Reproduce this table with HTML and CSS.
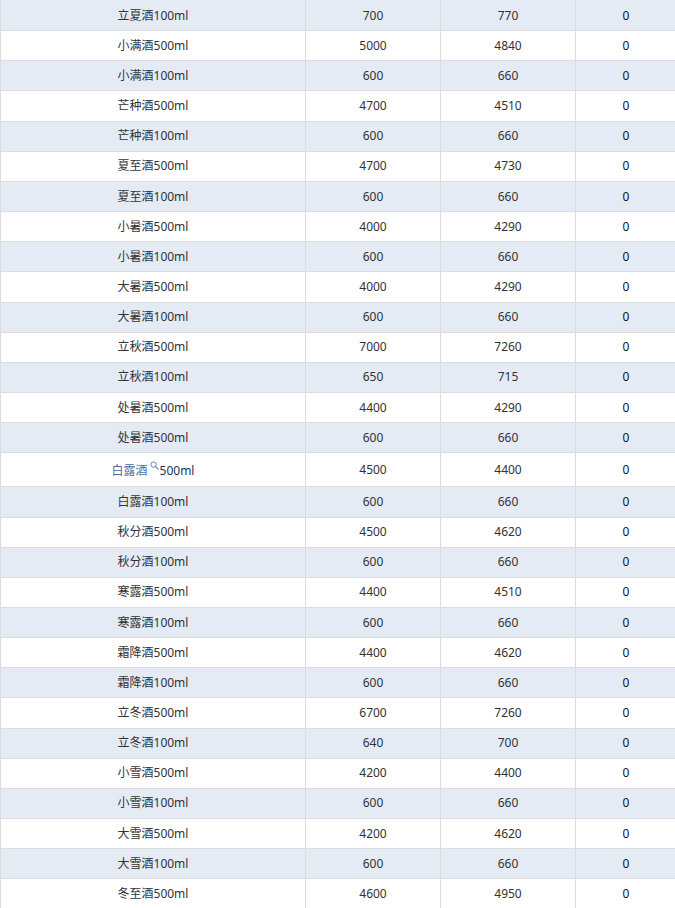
FILE: index.html
```html
<!DOCTYPE html>
<html lang="zh-CN">
<head>
<meta charset="utf-8">
<title>酒价表</title>
<link rel="stylesheet" href="styles.css">
</head>
<body>
<table class="price-table">
  <colgroup>
    <col class="c-name"><col class="c-num"><col class="c-num"><col class="c-last">
  </colgroup>
  <tbody>
    <tr class="alt first"><td>立夏酒100ml</td><td>700</td><td>770</td><td class="zero">0</td></tr>
    <tr><td>小满酒500ml</td><td>5000</td><td>4840</td><td class="zero">0</td></tr>
    <tr class="alt"><td>小满酒100ml</td><td>600</td><td>660</td><td class="zero">0</td></tr>
    <tr><td>芒种酒500ml</td><td>4700</td><td>4510</td><td class="zero">0</td></tr>
    <tr class="alt"><td>芒种酒100ml</td><td>600</td><td>660</td><td class="zero">0</td></tr>
    <tr><td>夏至酒500ml</td><td>4700</td><td>4730</td><td class="zero">0</td></tr>
    <tr class="alt"><td>夏至酒100ml</td><td>600</td><td>660</td><td class="zero">0</td></tr>
    <tr><td>小暑酒500ml</td><td>4000</td><td>4290</td><td class="zero">0</td></tr>
    <tr class="alt"><td>小暑酒100ml</td><td>600</td><td>660</td><td class="zero">0</td></tr>
    <tr><td>大暑酒500ml</td><td>4000</td><td>4290</td><td class="zero">0</td></tr>
    <tr class="alt"><td>大暑酒100ml</td><td>600</td><td>660</td><td class="zero">0</td></tr>
    <tr><td>立秋酒500ml</td><td>7000</td><td>7260</td><td class="zero">0</td></tr>
    <tr class="alt"><td>立秋酒100ml</td><td>650</td><td>715</td><td class="zero">0</td></tr>
    <tr><td>处暑酒500ml</td><td>4400</td><td>4290</td><td class="zero">0</td></tr>
    <tr class="alt"><td>处暑酒500ml</td><td>600</td><td>660</td><td class="zero">0</td></tr>
    <tr class="tall"><td><span class="link">白露酒</span><svg class="search" width="9" height="9" viewBox="0 0 9 9"><circle cx="3.6" cy="3.6" r="2.7" fill="none" stroke="#6d86ad" stroke-width="1"/><path d="M5.6 5.6 L8 8" stroke="#6d86ad" stroke-width="1.1" stroke-linecap="round"/></svg><span class="hl">500ml</span></td><td>4500</td><td>4400</td><td class="zero">0</td></tr>
    <tr class="alt"><td>白露酒100ml</td><td>600</td><td>660</td><td class="zero">0</td></tr>
    <tr><td>秋分酒500ml</td><td>4500</td><td>4620</td><td class="zero">0</td></tr>
    <tr class="alt"><td>秋分酒100ml</td><td>600</td><td>660</td><td class="zero">0</td></tr>
    <tr><td>寒露酒500ml</td><td>4400</td><td>4510</td><td class="zero">0</td></tr>
    <tr class="alt"><td>寒露酒100ml</td><td>600</td><td>660</td><td class="zero">0</td></tr>
    <tr><td>霜降酒500ml</td><td>4400</td><td>4620</td><td class="zero">0</td></tr>
    <tr class="alt"><td>霜降酒100ml</td><td>600</td><td>660</td><td class="zero">0</td></tr>
    <tr><td>立冬酒500ml</td><td>6700</td><td>7260</td><td class="zero">0</td></tr>
    <tr class="alt"><td>立冬酒100ml</td><td>640</td><td>700</td><td class="zero">0</td></tr>
    <tr><td>小雪酒500ml</td><td>4200</td><td>4400</td><td class="zero">0</td></tr>
    <tr class="alt"><td>小雪酒100ml</td><td>600</td><td>660</td><td class="zero">0</td></tr>
    <tr><td>大雪酒500ml</td><td>4200</td><td>4620</td><td class="zero">0</td></tr>
    <tr class="alt"><td>大雪酒100ml</td><td>600</td><td>660</td><td class="zero">0</td></tr>
    <tr><td>冬至酒500ml</td><td>4600</td><td>4950</td><td class="zero">0</td></tr>
  </tbody>
</table>
</body>
</html>
```

FILE: styles.css
```css
html, body {
  margin: 0;
  padding: 0;
  background: #ffffff;
  overflow: hidden;
}

.price-table {
  border-collapse: collapse;
  table-layout: fixed;
  width: 676px;
  margin-top: 0;
  font-family: "Noto Sans", "Noto Sans CJK SC", sans-serif;
  font-size: 12px;
  color: #333333;
}

.c-name { width: 305px; }
.c-num { width: 135px; }
.c-last { width: 101px; }

.price-table td {
  height: 29.17px;
  padding: 0;
  border: 1px solid #dcdcdc;
  text-align: center;
  vertical-align: middle;
  line-height: 16px;
}

.price-table tr.first td {
  border-top-color: #e4ebf5;
}

.price-table tr.alt td {
  background: #e4ebf5;
}

.price-table td.zero {
  color: #151515;
}

.price-table tr.tall td {
  height: 33px;
}

.link {
  color: #4e6d9c;
}

.search {
  display: inline-block;
  vertical-align: 5px;
  margin: 0 1px 0 2px;
}

.hl {
  color: #23315a;
}
```
